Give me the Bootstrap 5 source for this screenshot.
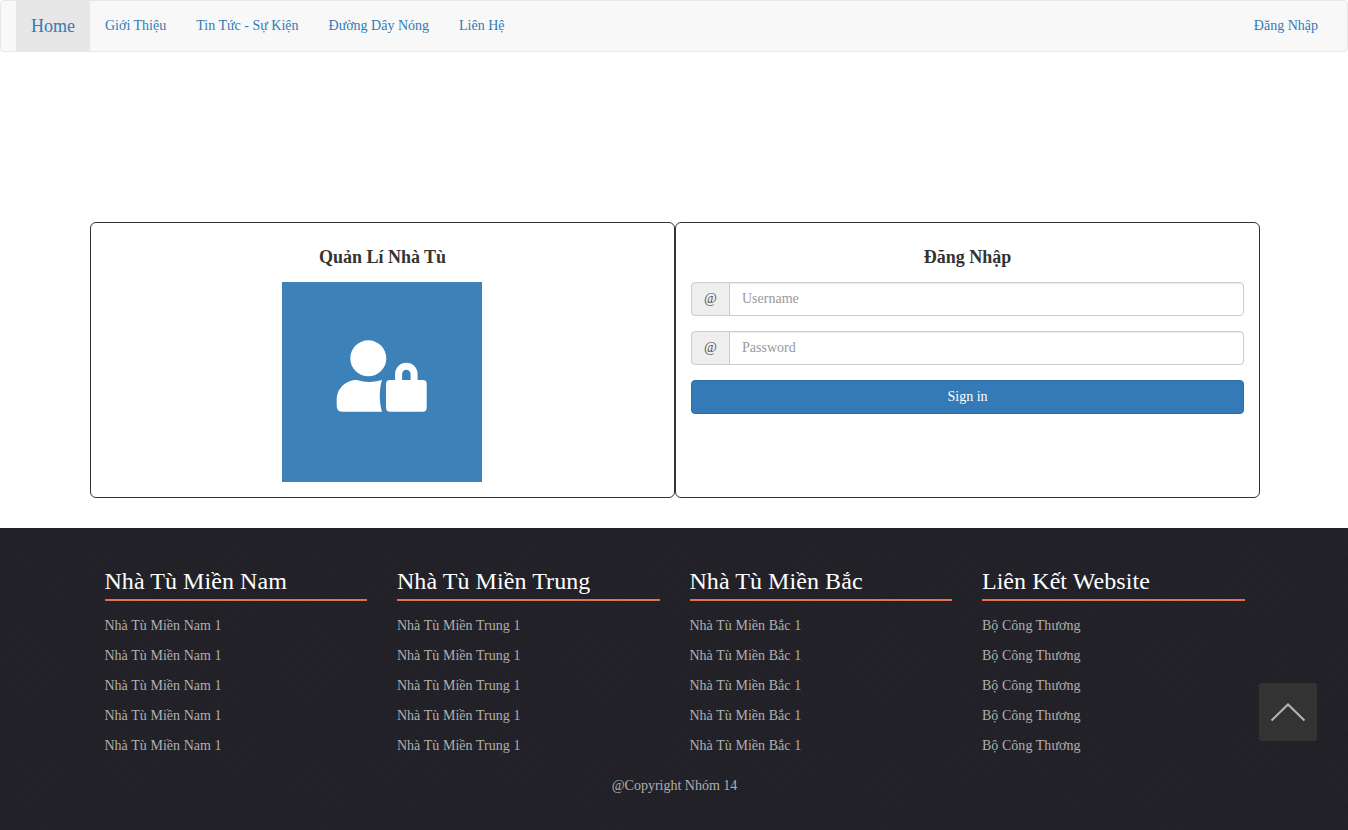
<!DOCTYPE html>
<html lang="vi">
<head>
  <meta charset="UTF-8" />
  <meta name="viewport" content="width=device-width, initial-scale=1">
  <title>Quản Lí Nhà Tù</title>
  <link href="https://cdn.jsdelivr.net/npm/bootstrap@5.3.0/dist/css/bootstrap.min.css" rel="stylesheet" />
  <style>
    body { font-family: "Liberation Serif", "Times New Roman", serif; font-size: 14px; line-height: 20px; color: #333; background: #fff; }
    .top-bar { background: #f8f8f8; border: 1px solid #e7e7e7; border-radius: 4px; padding: 0 14px 0 15px; height: 52px; align-items: stretch; flex-wrap: nowrap; }
    .top-bar .navbar-nav { flex-direction: row; }
    .top-bar .nav-link { color: #337ab7; padding: 15px; font-size: 14px; line-height: 20px; height: 50px; }
    .top-bar .nav-link.home-link { background: #e7e7e7; font-size: 18px; }
    .page-wrap { width: 1170px; margin-left: 89.5px; }
    .login-area { width: 1170px; margin-left: 90px; margin-top: 170px; margin-bottom: 30px; }
    .login-box { border: 1px solid #333; border-radius: 6px; padding: 15px; height: 276px; }
    .box-title { font-size: 18px; font-weight: 700; line-height: 20px; text-align: center; margin: 9px 0 15px; color: #333; font-family: inherit; }
    .avatar-tile { display: block; width: 200px; height: 200px; margin: 0 0 0 176px; }
    .login-box .input-group { margin-bottom: 15px; height: 34px; }
    .login-box .input-group-text { background: #eee; border-color: #ccc; color: #555; font-size: 14px; line-height: 20px; padding: 6px 12px; width: 39px; height: 34px; justify-content: center; border-radius: 4px 0 0 4px; }
    .login-box .form-control { border-color: #ccc; font-size: 14px; line-height: 20px; padding: 6px 12px; min-height: 34px; height: 34px; border-radius: 0 4px 4px 0; box-shadow: inset 0 1px 1px rgba(0,0,0,.075); }
    .login-box .form-control::placeholder { color: #999; }
    .signin-btn { background: #337ab7; border: 1px solid #2e6da4; color: #fff; font-size: 14px; line-height: 20px; padding: 6px 12px; border-radius: 4px; height: 34px; }
    .site-foot { background-color: #222127; background-image: repeating-linear-gradient(45deg, rgba(255,255,255,.006) 0 1px, rgba(0,0,0,.02) 1px 3px), repeating-linear-gradient(-45deg, rgba(255,255,255,.006) 0 1px, rgba(0,0,0,.02) 1px 3px); padding: 40px 0 35px; height: 302px; }
    .foot-col { padding: 0 15px; text-indent: -.1px; }
    .foot-head { color: #fff; font-size: 24px; line-height: 26px; font-weight: 400; letter-spacing: .07px; margin: 0 0 10px; padding-bottom: 5px; border-bottom: 2px solid #e5704f; font-family: inherit; }
    .foot-list { list-style: none; margin: 0; padding: 0; }
    .foot-list li { height: 30px; line-height: 30px; }
    .foot-list a { color: #b0b0b0; text-decoration: none; letter-spacing: .05px; }
    .foot-copy { color: #b0b0b0; text-align: center; margin: 15px 0 0; }
    .to-top { position: fixed; left: 1259px; top: 683px; width: 58px; height: 58px; background: #333; border-radius: 3px; display: flex; align-items: center; justify-content: center; }
  </style>
</head>
<body>

  <nav class="navbar top-bar">
    <ul class="navbar-nav">
      <li class="nav-item"><a class="nav-link home-link" href="#">Home</a></li>
      <li class="nav-item"><a class="nav-link" href="#">Giới Thiệu</a></li>
      <li class="nav-item"><a class="nav-link" href="#">Tin Tức - Sự Kiện</a></li>
      <li class="nav-item"><a class="nav-link" href="#">Đường Dây Nóng</a></li>
      <li class="nav-item"><a class="nav-link" href="#">Liên Hệ</a></li>
    </ul>
    <ul class="navbar-nav">
      <li class="nav-item"><a class="nav-link" href="#">Đăng Nhập</a></li>
    </ul>
  </nav>

  <div class="login-area">
    <div class="row g-0">
      <div class="col-6">
        <div class="login-box">
          <h3 class="box-title">Quản Lí Nhà Tù</h3>
          <svg class="avatar-tile" viewBox="0 0 200 200" role="img" aria-label="Quản Lí Nhà Tù">
            <rect width="200" height="200" fill="#3d81b9"/>
            <circle cx="86.3" cy="76.3" r="18" fill="#fff"/>
            <path fill="#fff" d="M54.7 124V118C54.7 106 64 98 75 98C83 100.500 91 100.500 100 98C97 108 97 120 100 129.700H60Q54.700 129.700 54.700 124Z"/>
            <rect x="104" y="98" width="40.700" height="31.700" rx="4" fill="#fff"/>
            <path fill="none" stroke="#fff" stroke-width="7" d="M116.600 100V92A7.750 7.750 0 0 1 132.100 92V100"/>
          </svg>
        </div>
      </div>
      <div class="col-6">
        <div class="login-box">
          <h3 class="box-title">Đăng Nhập</h3>
          <form>
            <div class="input-group">
              <span class="input-group-text">@</span>
              <input type="text" class="form-control" placeholder="Username">
            </div>
            <div class="input-group">
              <span class="input-group-text">@</span>
              <input type="password" class="form-control" placeholder="Password">
            </div>
            <button type="button" class="btn signin-btn w-100">Sign in</button>
          </form>
        </div>
      </div>
    </div>
  </div>

  <footer class="site-foot">
    <div class="page-wrap">
      <div class="row g-0" id="foot-cols"></div>
      <p class="foot-copy">@Copyright Nhóm 14</p>
    </div>
  </footer>

  <a class="to-top" href="#" aria-label="Lên đầu trang">
    <svg width="36" height="20" viewBox="0 0 36 20"><path d="M1.500 18.500L18 2.500L34.500 18.500" fill="none" stroke="#b5b5b5" stroke-width="2"/></svg>
  </a>

  <script>
    const footCols = [
      ['Nhà Tù Miền Nam', 'Nhà Tù Miền Nam 1'],
      ['Nhà Tù Miền Trung', 'Nhà Tù Miền Trung 1'],
      ['Nhà Tù Miền Bắc', 'Nhà Tù Miền Bắc 1'],
      ['Liên Kết Website', 'Bộ Công Thương']
    ];
    document.getElementById('foot-cols').innerHTML = footCols.map(([head, item]) => `
      <div class="col-3 foot-col">
        <h3 class="foot-head">${head}</h3>
        <ul class="foot-list">
          ${Array(5).fill(`<li><a href="#">${item}</a></li>`).join('')}
        </ul>
      </div>
    `).join('');
  </script>
  <script src="https://cdn.jsdelivr.net/npm/bootstrap@5.3.0/dist/js/bootstrap.bundle.min.js"></script>
</body>
</html>
